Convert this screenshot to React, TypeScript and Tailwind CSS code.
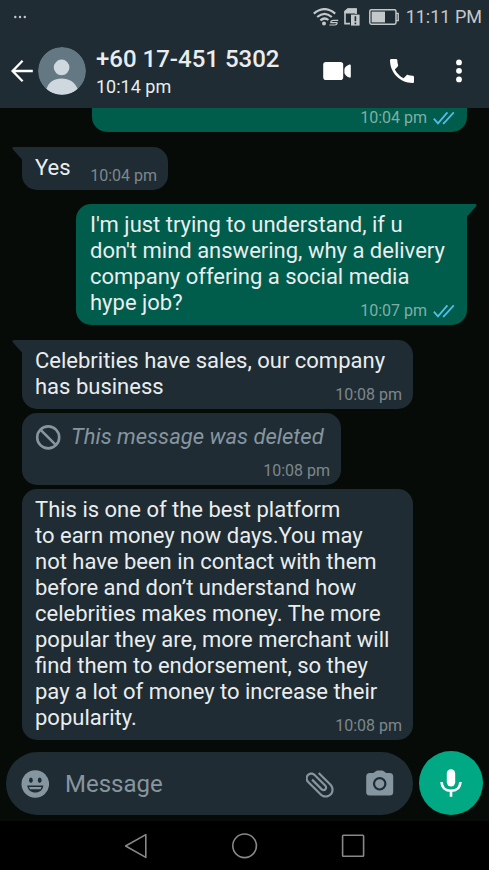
import type { ReactNode } from 'react';

type MessageProps = {
  side: 'in' | 'out';
  time: string;
  tail?: boolean;
  className?: string;
  lastLine?: string;
  children?: ReactNode;
};

function Ticks() {
  return (
    <svg className="h-4 w-[22px]" viewBox="0 0 22 16" fill="none" stroke="#53bdeb" strokeWidth="1.7" aria-label="Read">
      <path d="M0.8 8.6 L5 13.4 L14.4 2.4" />
      <path d="M10 12.8 L10.8 13.4 L20.8 2.4" />
    </svg>
  );
}

function Message({ side, time, tail, className = '', lastLine, children }: MessageProps) {
  const out = side === 'out';
  const corner = tail ? (out ? 'rounded-tr-none' : 'rounded-tl-none') : '';
  return (
    <article
      className={`relative shrink-0 rounded-[15px] pt-2 ${
        out ? 'self-end bg-[#005c4b] pr-3 pl-[14px]' : 'self-start bg-[#202c33] pr-[11px] pl-[13px]'
      } ${corner} ${className}`}
    >
      {tail && (
        <svg
          className={`absolute top-0 h-[14px] w-[11px] ${out ? 'left-full -ml-px -scale-x-100' : 'right-full -mr-px'}`}
          viewBox="0 0 11 14"
          fill={out ? '#005c4b' : '#202c33'}
          aria-hidden="true"
        >
          <path d="M11 0 H2 C0.4 0 0 1.4 1 2.6 L10 12.5 V14 H11 Z" />
        </svg>
      )}
      {children && (
        <div className="text-[22px] leading-[26px] whitespace-pre text-[#e9edef]">{children}</div>
      )}
      <div className="flex h-[35px] items-start justify-between">
        <span className="text-[22px] leading-[26px] text-[#e9edef]">{lastLine}</span>
        <div
          className={`flex items-center gap-[6px] self-end pb-1 text-base leading-5 ${
            out ? 'text-[#80aea5]' : 'text-[#7d878d]'
          }`}
        >
          <time>{time}</time>
          {out && <Ticks />}
        </div>
      </div>
    </article>
  );
}

function StatusBar() {
  return (
    <div className="flex h-[33px] items-center pr-[7px] pl-[14px] text-[#c3c8cb]">
      <svg className="h-1 w-3" viewBox="0 0 12 4" fill="currentColor" aria-hidden="true">
        <circle cx="1.3" cy="2" r="1.2" />
        <circle cx="6" cy="2" r="1.2" />
        <circle cx="10.8" cy="2" r="1.2" />
      </svg>
      <svg className="ml-auto h-[18px] w-[26px]" viewBox="0 0 26 18" fill="none" stroke="currentColor" aria-label="Wi-Fi">
        <path d="M0.8 5.6 Q11.5 -3.4 22.2 5.6" strokeWidth="2.2" />
        <path d="M4.2 9 Q11.5 2.6 18.8 9" strokeWidth="2.2" />
        <path d="M7.4 12.4 Q11.5 8.8 15.4 12" strokeWidth="2.2" />
        <circle cx="11" cy="15.4" r="2" fill="currentColor" stroke="none" />
        <path d="M25.2 12.4 H20.4 Q17.6 12.4 17.8 14.6 H22.8 M16.4 17 H21.4 Q24.4 17 24 14.6 H19" strokeWidth="1.2" />
      </svg>
      <svg className="ml-[5px] h-[18px] w-4" viewBox="0 0 16 18" fill="none" aria-label="No SIM">
        <path d="M1 3.4 L4 1 H12 V6 M1 3 V15.6 H6" stroke="currentColor" strokeWidth="1.6" />
        <path d="M0.5 3.4 L3.6 0.4 H12.8 V5.4 H0.5 Z" fill="currentColor" />
        <path d="M7 6.6 H15.6 V17.6 H7 Z" fill="currentColor" />
        <path d="M11.4 8.2 V13.2 M11.4 14.4 V16.2" stroke="#202c33" strokeWidth="1.6" />
      </svg>
      <svg className="ml-[9px] h-4 w-[30px]" viewBox="0 0 30 16" aria-label="Battery">
        <rect x="0.8" y="0.8" width="26.2" height="14.4" rx="1.6" fill="none" stroke="currentColor" strokeWidth="1.5" />
        <rect x="2.6" y="2.6" width="13.4" height="10.8" fill="currentColor" />
        <path d="M27 4.4 H29.2 V11.6 H27" fill="none" stroke="currentColor" strokeWidth="1.4" />
      </svg>
      <time className="ml-[7px] text-[18px] leading-6">11:11 PM</time>
    </div>
  );
}

function ChatHeader() {
  return (
    <div className="flex h-[75px] items-center pr-[15px] pl-[10px]">
      <button type="button" aria-label="Back" className="flex items-center">
        <svg className="h-6 w-6" viewBox="0 0 24 24" fill="none" stroke="#fff" strokeWidth="2.3" aria-hidden="true">
          <path d="M22.8 12 H2.6 M12.6 1.8 L2.6 12 L12.6 22.2" />
        </svg>
      </button>
      <svg className="ml-1 h-12 w-12 rounded-full" viewBox="0 0 48 48" aria-label="Profile photo">
        <circle cx="24" cy="24" r="24" fill="#647884" />
        <circle cx="23.6" cy="20.4" r="7.8" fill="#cfd8df" />
        <path d="M8.4 42 C11 35 16 31.6 23.6 31.6 C31.2 31.6 36.6 35 39.6 42 A24 24 0 0 1 8.4 42 Z" fill="#cfd8df" />
      </svg>
      <div className="ml-[10px] min-w-0 flex-1 pt-1 whitespace-nowrap text-[#e9edef]">
        <h1 className="text-2xl leading-7 font-medium">+60 17-451 5302</h1>
        <p className="text-lg leading-7">10:14 pm</p>
      </div>
      <div className="flex items-center text-white">
        <button type="button" aria-label="Video call" className="mr-[39px]">
          <svg className="h-5 w-7" viewBox="0 0 28 20" fill="currentColor" aria-hidden="true">
            <path d="M3 1 H17.4 Q20.2 1 20.2 3.8 V16.2 Q20.2 19 17.4 19 H3 Q0.2 19 0.2 16.2 V3.8 Q0.2 1 3 1 Z M21.4 8.2 Q22 5.4 26.4 3.6 Q27.8 3.2 27.8 4.8 V15.4 Q27.8 17 26.4 16.6 Q22 14.8 21.4 12 Z" />
          </svg>
        </button>
        <button type="button" aria-label="Call" className="mr-[31px]">
          <svg className="h-6 w-6" viewBox="3 3 18 18" fill="currentColor" aria-hidden="true">
            <path d="M6.62 10.79c1.44 2.83 3.76 5.14 6.59 6.59l2.2-2.2c.27-.27.67-.36 1.02-.24 1.12.37 2.33.57 3.57.57.55 0 1 .45 1 1V20c0 .55-.45 1-1 1-9.39 0-17-7.61-17-17 0-.55.45-1 1-1h3.5c.55 0 1 .45 1 1 0 1.25.2 2.45.57 3.57.11.35.03.74-.25 1.02l-2.2 2.2z" />
          </svg>
        </button>
        <button type="button" aria-label="More options" className="px-[6px]">
          <svg className="h-6 w-[17px]" viewBox="0 0 17 24" fill="currentColor" aria-hidden="true">
            <circle cx="8" cy="3.4" r="2.9" />
            <circle cx="8" cy="11.8" r="2.9" />
            <circle cx="8" cy="20.4" r="2.9" />
          </svg>
        </button>
      </div>
    </div>
  );
}

function Composer() {
  return (
    <form className="flex items-end gap-[6px] px-[6px] pt-[11px] pb-[6px]" onSubmit={(e) => e.preventDefault()}>
      <div className="flex h-[63px] min-w-0 flex-1 items-center rounded-full bg-[#202c33] pr-[19px] pl-[15px] text-[#8696a0]">
        <button type="button" aria-label="Emoji">
          <svg className="h-7 w-7" viewBox="0 0 28 28" aria-hidden="true">
            <circle cx="14.3" cy="14" r="13.8" fill="currentColor" />
            <ellipse cx="9.9" cy="10.2" rx="1.9" ry="2.7" fill="#202c33" />
            <ellipse cx="18.7" cy="10.2" rx="1.9" ry="2.7" fill="#202c33" />
            <path d="M6.2 15.6 H22.4 C21.8 20.2 18.6 22.6 14.3 22.6 C10 22.6 6.8 20.2 6.2 15.6 Z" fill="#202c33" />
            <path d="M8 17 H20.6 L19.6 19.2 H9 Z" fill="currentColor" />
          </svg>
        </button>
        <input
          type="text"
          aria-label="Message"
          placeholder="Message"
          className="ml-4 h-8 min-w-0 flex-1 bg-transparent text-2xl text-[#e9edef] outline-none placeholder:text-[#8696a0]"
        />
        <button type="button" aria-label="Attach" className="ml-4">
          <svg className="h-7 w-7" viewBox="0 0 28 28" fill="currentColor" aria-hidden="true">
            <path
              transform="translate(14 14) rotate(-45) scale(1.45) translate(-12.5 -12)"
              d="M16.5 6v11.5c0 2.21-1.79 4-4 4s-4-1.79-4-4V5c0-1.38 1.12-2.5 2.5-2.5s2.5 1.12 2.5 2.5v10.5c0 .55-.45 1-1 1s-1-.45-1-1V6H10v9.5c0 1.38 1.12 2.5 2.5 2.5s2.5-1.12 2.5-2.5V5c0-2.21-1.79-4-4-4S7 2.79 7 5v12.5c0 3.04 2.46 5.5 5.5 5.5s5.5-2.46 5.5-5.5V6h-1.5z"
            />
          </svg>
        </button>
        <button type="button" aria-label="Camera" className="ml-8">
          <svg className="h-7 w-7" viewBox="0 0 28 28" aria-hidden="true">
            <path
              fill="currentColor"
              d="M7.4 3 Q9 1.8 9.8 1.2 Q10.6 0.4 12 0.4 H15.6 Q17 0.4 17.8 1.2 L20.2 3 H23.6 Q27.2 3 27.2 6.6 V22 Q27.2 25.6 23.6 25.6 H3.8 Q0.2 25.6 0.2 22 V6.6 Q0.2 3 3.8 3 Z"
            />
            <circle cx="13.7" cy="13.8" r="5.7" fill="none" stroke="#202c33" strokeWidth="2.2" />
          </svg>
        </button>
      </div>
      <button type="button" aria-label="Record voice message" className="flex h-16 w-16 items-center justify-center rounded-full bg-[#00a884]">
        <svg className="h-7 w-[22px]" viewBox="0 0 22 28" fill="none" aria-hidden="true">
          <rect x="6.8" y="0.2" width="8.4" height="17.2" rx="4.2" fill="#fff" />
          <path d="M1.6 13 C1.8 18.6 5.6 21.8 11 21.8 C16.4 21.8 20.2 18.6 20.4 13 M11 21.8 V27.8" stroke="#fff" strokeWidth="2.6" />
        </svg>
      </button>
    </form>
  );
}

function NavigationBar() {
  return (
    <nav className="flex h-[49px] items-center justify-center gap-[83px] bg-black text-[#86888a]">
      <button type="button" aria-label="System back">
        <svg className="h-[26px] w-[26px]" viewBox="0 0 26 26" fill="none" stroke="currentColor" strokeWidth="1.6" strokeLinejoin="round" aria-hidden="true">
          <path d="M22.8 1.6 V24.4 L2.6 13 Z" />
        </svg>
      </button>
      <button type="button" aria-label="Home">
        <svg className="h-[26px] w-[26px]" viewBox="0 0 26 26" fill="none" stroke="currentColor" strokeWidth="1.6" aria-hidden="true">
          <circle cx="12.6" cy="12.8" r="11.8" />
        </svg>
      </button>
      <button type="button" aria-label="Recent apps">
        <svg className="h-[26px] w-[26px]" viewBox="0 0 26 26" fill="none" stroke="currentColor" strokeWidth="1.6" aria-hidden="true">
          <rect x="1.6" y="2.2" width="21" height="21" rx="0.8" />
        </svg>
      </button>
    </nav>
  );
}

export default function App() {
  return (
    <div className="flex h-screen flex-col overflow-hidden bg-[#060b08] font-['Roboto',sans-serif]">
      <header className="shrink-0 bg-[#202c33]">
        <StatusBar />
        <ChatHeader />
      </header>
      <main className="flex min-h-0 flex-1 flex-col justify-end overflow-hidden px-[22px]">
        <Message side="out" time="10:04 pm" className="w-[375px]" />
        <Message side="in" time="10:04 pm" tail className="mt-[15px] w-[146px]" lastLine="Yes" />
        <Message side="out" time="10:07 pm" tail className="mt-[14px] w-[391px]" lastLine="hype job?">
          {"I'm just trying to understand, if u\ndon't mind answering, why a delivery\ncompany offering a social media"}
        </Message>
        <Message side="in" time="10:08 pm" tail className="mt-[15px] w-[391px]" lastLine="has business">
          Celebrities have sales, our company
        </Message>
        <Message side="in" time="10:08 pm" className="mt-1 w-[319px]">
          <div className="flex items-center gap-[10px] pt-[3px] text-[#8696a0]">
            <svg className="h-[26px] w-[26px] shrink-0" viewBox="0 0 26 26" fill="none" stroke="currentColor" strokeWidth="2.6" aria-hidden="true">
              <circle cx="13.2" cy="13.4" r="11" />
              <path d="M5.4 5.6 L21 21.2" />
            </svg>
            <em>This message was deleted</em>
          </div>
        </Message>
        <Message side="in" time="10:08 pm" className="mt-1 w-[391px]" lastLine="popularity.">
          {
            'This is one of the best platform\nto earn money now days.You may\nnot have been in contact with them\nbefore and don’t understand how\ncelebrities makes money. The more\npopular they are, more merchant will\nfind them to endorsement, so they\npay a lot of money to increase their'
          }
        </Message>
      </main>
      <Composer />
      <NavigationBar />
    </div>
  );
}
